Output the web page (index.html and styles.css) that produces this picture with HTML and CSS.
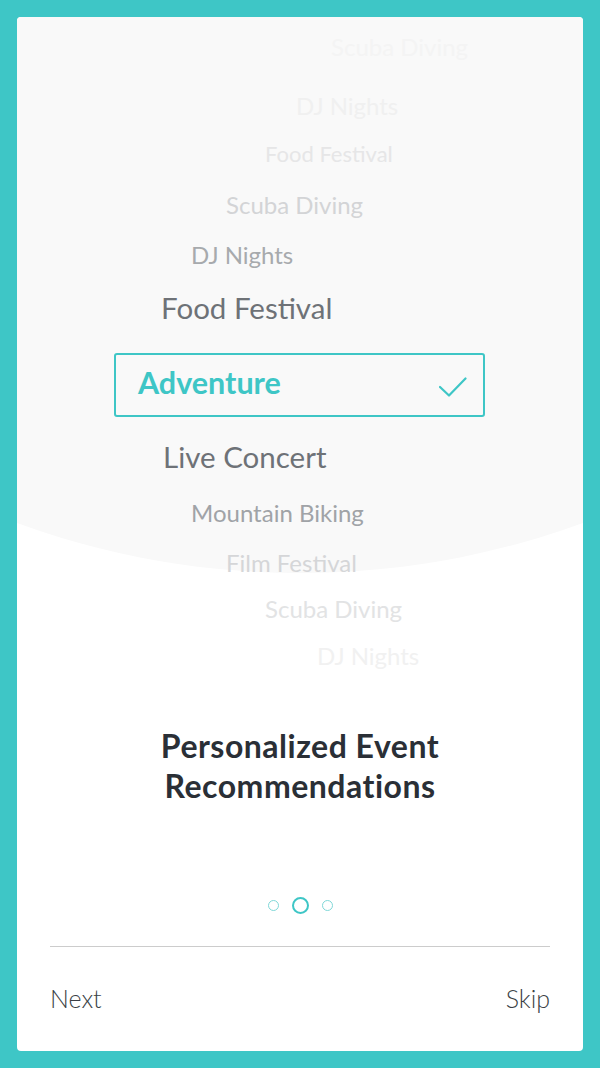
FILE: index.html
```html
<!DOCTYPE html>
<html>
<head>
<meta charset="utf-8">
<link rel="stylesheet" href="styles.css">
</head>
<body>
<div class="card">
  <div class="wheel">
    <div class="item i1">Scuba Diving</div>
    <div class="item i2">DJ Nights</div>
    <div class="item i3">Food Festival</div>
    <div class="item i4">Scuba Diving</div>
    <div class="item i5">DJ Nights</div>
    <div class="item i6">Food Festival</div>
    <div class="selected">
      <span class="sel-label">Adventure</span>
      <svg class="check" width="28" height="20" viewBox="0 0 28 20"><polyline points="1,10 10,18.5 26.5,1.5" fill="none" stroke="#3ec6c6" stroke-width="2.2" stroke-linecap="round" stroke-linejoin="round"/></svg>
    </div>
    <div class="item i7">Live Concert</div>
    <div class="item i8">Mountain Biking</div>
    <div class="item i9">Film Festival</div>
    <div class="item i10">Scuba Diving</div>
    <div class="item i11">DJ Nights</div>
  </div>
  <h1 class="title">Personalized Event<br>Recommendations</h1>
  <div class="dots">
    <span class="dot"></span>
    <span class="dot active"></span>
    <span class="dot"></span>
  </div>
  <div class="footer">
    <span class="btn">Next</span>
    <span class="btn">Skip</span>
  </div>
</div>
</body>
</html>
```
FILE: styles.css
```css
html, body {
  margin: 0;
  padding: 0;
}
body {
  background: #3ec6c6;
  width: 600px;
  height: 1068px;
  padding: 17px;
  box-sizing: border-box;
  font-family: Lato, "Open Sans", sans-serif;
}
.card {
  position: relative;
  background: #ffffff;
  border-radius: 4px;
  height: 1034px;
  overflow: hidden;
  display: flex;
  flex-direction: column;
}
.card::before {
  content: "";
  position: absolute;
  left: 50%;
  top: -1096px;
  width: 1652px;
  height: 1652px;
  margin-left: -826px;
  border-radius: 50%;
  background: #f9f9f9;
}
.wheel {
  position: relative;
  display: flex;
  flex-direction: column;
  align-items: flex-start;
}
.item {
  white-space: nowrap;
  font-size: 24px;
}
.i1 { height: 60px; line-height: 60px; margin-left: 314px; color: #f4f4f4; }
.i2 { height: 58px; line-height: 58px; margin-left: 279px; color: #f0f0f0; }
.i3 { height: 38px; line-height: 38px; margin-left: 248px; color: #e6e6e7; font-size: 22px; }
.i4 { height: 64px; line-height: 64px; margin-left: 209px; color: #d3d4d6; }
.i5 { height: 36px; line-height: 36px; margin-left: 174px; color: #a7aaad; }
.i6 { height: 72px; line-height: 70px; margin-left: 144px; color: #6e7277; font-size: 29.5px; }
.selected {
  margin-top: 8px;
  margin-left: 97px;
  width: 371px;
  height: 64px;
  box-sizing: border-box;
  border: 2px solid #3ec6c6;
  border-radius: 3px;
  display: flex;
  align-items: center;
  justify-content: space-between;
  padding: 0 16px 0 22px;
}
.sel-label {
  color: #3ec6c6;
  font-weight: 700;
  font-size: 30.5px;
  margin-top: -6px;
}
.check {
  margin-top: 4px;
}
.i7 { height: 82px; line-height: 80px; margin-left: 146px; color: #6e7277; font-size: 29.5px; }
.i8 { height: 28px; line-height: 28px; margin-left: 174px; color: #a0a3a7; }
.i9 { height: 72px; line-height: 72px; margin-left: 209px; color: #d5d6d8; }
.i10 { height: 20px; line-height: 20px; margin-left: 248px; color: #e2e3e4; }
.i11 { height: 74px; line-height: 74px; margin-left: 300px; color: #f1f1f1; }
.title {
  position: relative;
  margin: 33px 0 0;
  text-align: center;
  font-size: 32px;
  letter-spacing: 0.5px;
  line-height: 40px;
  font-weight: 700;
  color: #2a2f36;
}
.dots {
  display: flex;
  justify-content: center;
  align-items: center;
  gap: 13px;
  margin-top: 91px;
}
.dot {
  width: 11px;
  height: 11px;
  box-sizing: border-box;
  border: 1px solid #7fd8d8;
  border-radius: 50%;
}
.dot.active {
  width: 17px;
  height: 17px;
  border: 2.5px solid #3ec6c6;
}
.footer {
  margin: auto 33px 0;
  border-top: 1.5px solid #cccccc;
  height: 104px;
  display: flex;
  justify-content: space-between;
  align-items: center;
}
.btn {
  font-size: 25px;
  font-weight: 300;
  color: #3a3f45;
  margin-top: -2px;
}
```
